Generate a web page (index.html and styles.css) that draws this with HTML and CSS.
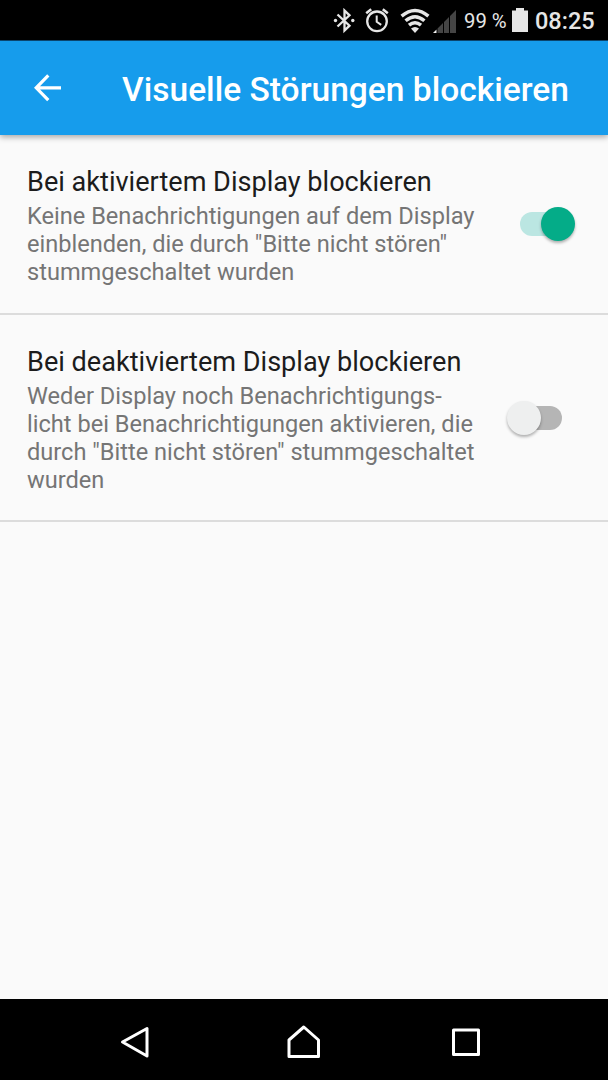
FILE: index.html
```html
<!DOCTYPE html>
<html lang="de">
<head>
  <meta charset="UTF-8">
  <meta name="viewport" content="width=device-width, initial-scale=1.0">
  <title>Visuelle Störungen blockieren</title>
  <link rel="stylesheet" href="styles.css">
</head>
<body>
  <div class="statusbar">
    <svg class="bluetooth" width="22" height="26" viewBox="0 0 22 26">
      <path d="M4.5 6.5L16.5 17.7L11.5 22.5V2.5L16.5 7.3L4.5 18.5" fill="none" stroke="#e6e6e6" stroke-width="2.3"/>
      <circle cx="2.5" cy="12.5" r="1.7" fill="#e6e6e6"/>
      <circle cx="19.8" cy="12.5" r="1.7" fill="#e6e6e6"/>
    </svg>
    <svg class="alarm" width="24" height="26" viewBox="0 0 24 26">
      <circle cx="12" cy="13.3" r="9.8" fill="none" stroke="#e6e6e6" stroke-width="2.3"/>
      <path d="M11.7 7.5V13.8L16.2 16.8" fill="none" stroke="#e6e6e6" stroke-width="2"/>
      <path d="M1.2 5.2L6.2 1.2M22.8 5.2L17.8 1.2" stroke="#e6e6e6" stroke-width="2.5"/>
    </svg>
    <svg class="wifi" width="30" height="26" viewBox="0 0 30 26">
      <g fill="none" stroke="#e6e6e6" stroke-width="3.5">
        <path d="M1.6 8.2Q15 -3.2 28.4 8.2"/>
        <path d="M5.6 12.8Q15 4.6 24.4 12.8"/>
        <path d="M9 17.2Q15 12.2 21 17.2"/>
      </g>
      <path d="M11 20.5Q15 17.4 19 20.5L15 25Z" fill="#e6e6e6"/>
    </svg>
    <svg class="signal" width="24" height="25" viewBox="0 0 24 25">
      <path d="M4.5 19.5L10 14V24H4.5ZM11 13L16 8V24H11ZM17 7L23 1V24H17Z" fill="#454545"/>
      <path d="M0 24L3.5 20.5V24Z" fill="#f2f2f2"/>
    </svg>
    <span class="percent">99 %</span>
    <svg class="battery" width="16" height="25" viewBox="0 0 16 25">
      <path d="M0 2.5H4V0H12V2.5H16V24H0Z" fill="#e6e6e6"/>
    </svg>
    <span class="clock">08:25</span>
  </div>

  <header class="toolbar">
    <svg class="back" width="28" height="28" viewBox="0 0 28 28">
      <path d="M27 13.8H2.5M14.3 1.4L2.2 13.8L14.3 26.2" fill="none" stroke="#fff" stroke-width="3.2"/>
    </svg>
    <h1>Visuelle Störungen blockieren</h1>
  </header>

  <main class="settings">
    <div class="item">
      <div class="text">
        <h2>Bei aktiviertem Display blockieren</h2>
        <p>Keine Benachrichtigungen auf dem Display<br>einblenden, die durch "Bitte nicht stören"<br>stummgeschaltet wurden</p>
      </div>
      <div class="switch on"><div class="thumb"></div></div>
    </div>
    <div class="item">
      <div class="text">
        <h2>Bei deaktiviertem Display blockieren</h2>
        <p>Weder Display noch Benachrichtigungs-<br>licht bei Benachrichtigungen aktivieren, die<br>durch "Bitte nicht stören" stummgeschaltet<br>wurden</p>
      </div>
      <div class="switch"><div class="thumb"></div></div>
    </div>
  </main>

  <nav class="navbar">
    <svg width="34" height="34" viewBox="0 0 34 34">
      <path d="M31 3.5V31L6.5 17Z" fill="none" stroke="#fff" stroke-width="3" stroke-linejoin="round"/>
    </svg>
    <svg class="home" width="34" height="34" viewBox="0 0 34 34">
      <path d="M2 31.5V15L16.8 2L31.5 15V31.5Z" fill="none" stroke="#fff" stroke-width="3" stroke-linejoin="round"/>
    </svg>
    <svg width="34" height="34" viewBox="0 0 34 34">
      <rect x="4.5" y="5" width="25" height="24.5" fill="none" stroke="#fff" stroke-width="3" stroke-linejoin="round"/>
    </svg>
  </nav>
</body>
</html>
```

FILE: styles.css
```css
* { box-sizing: border-box; }
body { margin: 0; height: 1080px; display: flex; flex-direction: column; overflow: hidden; background: #fafafa; font-family: Roboto, sans-serif; }
h1, h2, p { margin: 0; white-space: nowrap; }
svg { display: block; flex-shrink: 0; }

.statusbar { height: 41px; flex-shrink: 0; display: flex; align-items: flex-start; padding: 8px 0 0 333px; background: #000; color: #e6e6e6; border-bottom: 1px solid #0b4a76; }
.alarm { margin-left: 10px; }
.wifi { margin-left: 11px; }
.signal { margin: 1px 0 0 3px; }
.percent { width: 42px; margin-left: 7px; font-size: 20.3px; line-height: 26px; white-space: nowrap; }
.battery { margin-left: 6px; }
.clock { margin-left: 7px; font-size: 23.5px; font-weight: 500; line-height: 27px; }

.toolbar { height: 94px; flex-shrink: 0; display: flex; align-items: center; padding-left: 34px; background: #169cec; color: #fff; box-shadow: 0 2px 6px rgba(0, 0, 0, 0.35); }
.toolbar h1 { margin: 3px 0 0 60px; font-size: 33.55px; font-weight: 500; line-height: 40px; }

.settings { flex: 1; }
.item { display: flex; align-items: center; justify-content: space-between; padding: 31px 33px 27px 27px; border-bottom: 2px solid #dcdcdc; }
.item:last-child { padding-bottom: 26px; }
.item h2 { font-size: 27.1px; font-weight: 400; line-height: 32px; color: #1c1c1c; }
.item p { margin-top: 4px; font-size: 23.6px; line-height: 28px; color: #757575; }

.switch { position: relative; width: 68px; height: 34px; margin-bottom: 5px; display: flex; align-items: center; }
.switch::before { content: ""; position: absolute; left: 13px; top: 5px; width: 42px; height: 24px; border-radius: 12px; background: #b5b5b5; }
.thumb { position: relative; width: 34px; height: 34px; border-radius: 50%; background: #eeefef; box-shadow: 0 2px 3px rgba(0, 0, 0, 0.3); }
.switch.on { justify-content: flex-end; }
.switch.on::before { background: #bbe6e2; }
.switch.on .thumb { background: #04ac88; }

.navbar { height: 81px; flex-shrink: 0; display: flex; align-items: center; justify-content: space-between; padding: 5px 125px 0 116px; background: #000; }
.home { margin-left: 9px; }
```
